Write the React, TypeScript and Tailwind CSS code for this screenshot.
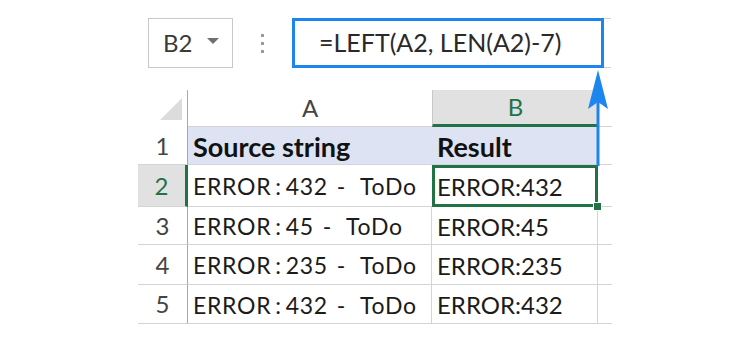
import React from 'react';

const rows = [
  { n: '3', a: 'ERROR:45', b: 'ERROR:45', h: 'h-[38px]' },
  { n: '4', a: 'ERROR:235', b: 'ERROR:235', h: 'h-[40px]' },
  { n: '5', a: 'ERROR:432', b: 'ERROR:432', h: 'h-[39px]' }
];

function SourceText({ code }: { code: string }) {
  const [head, num] = code.split(':');
  return (
    <span className="flex items-baseline whitespace-pre tracking-[0.7px]">
      {head}
      <span className="mx-[4px]">:</span>
      {num}
      <span className="ml-[9px] mr-[14px]">-</span>
      ToDo
    </span>
  );
}

export default function App() {
  return (
    <div className="relative w-[750px] h-[353px] bg-white font-['Lato',sans-serif] text-[#1b1b1b] overflow-hidden">
      {/* formula bar */}
      <div className="flex items-center pt-[18px] pl-[148px]">
        <div className="flex items-center w-[85px] h-[50px] border border-[#c9c9c9] pl-[14px]">
          <span className="text-[24px] text-[#3a3a3a]">B2</span>
          <span className="ml-[15px] mt-[-4px] w-0 h-0 border-l-[6px] border-r-[6px] border-t-[6px] border-l-transparent border-r-transparent border-t-[#707070]" />
        </div>
        <div className="flex flex-col gap-[5px] ml-[28px] mr-[28px]">
          <span className="w-[3px] h-[3px] bg-[#9a9a9a]" />
          <span className="w-[3px] h-[3px] bg-[#9a9a9a]" />
          <span className="w-[3px] h-[3px] bg-[#9a9a9a]" />
        </div>
        <div className="flex items-center w-[312px] h-[50px] border-[3px] border-[#1d86ee] pl-[24px]">
          <span className="text-[25px] text-[#2a2a2a]">=LEFT(A2, LEN(A2)-7)</span>
        </div>
        <div className="flex flex-col justify-between h-[50px]">
          <span className="w-[7px] h-px bg-[#cfcfcf]" />
          <span className="w-[7px] h-px bg-[#cfcfcf]" />
        </div>
      </div>

      {/* sheet */}
      <div className="mt-[22px] ml-[138px] grid grid-cols-[50px_244px_166px_14px] text-[24px]">
        {/* column headers */}
        <div className="relative h-[37px] border-r border-[#a8a8a8]">
          <svg className="absolute left-[22px] top-[8px]" width="22" height="22" viewBox="0 0 22 22">
            <polygon points="22,0 22,22 0,22" fill="#dcdcdc" />
          </svg>
        </div>
        <div className="h-[37px] flex items-center justify-center text-[#444] border-b border-[#d4d4d4]">A</div>
        <div className="h-[37px] flex items-center justify-center bg-[#e1e1e1] text-[#217346] border-b-[3px] border-[#217346] border-l border-l-[#c8c8c8]">B</div>
        <div className="h-[37px] border-b border-[#d4d4d4]" />

        {/* row 1 */}
        <div className="h-[38px] flex items-center justify-center text-[#444] border-r border-[#a8a8a8] border-b border-b-[#d4d4d4]">1</div>
        <div className="h-[38px] flex items-center pl-[5px] pt-[3px] text-[27px] font-bold bg-[#dde3f2] text-[#111] border-b border-[#d4d4d4]">Source string</div>
        <div className="h-[38px] flex items-center pl-[5px] pt-[3px] text-[27px] font-bold bg-[#dde3f2] text-[#111] border-b border-[#d4d4d4]">Result</div>
        <div className="h-[38px] border-b border-l border-[#d4d4d4]" />

        {/* row 2 */}
        <div className="h-[42px] flex items-center justify-center text-[#217346] bg-[#e1e1e1] border-r-[3px] border-[#217346] border-b border-b-[#d4d4d4]">2</div>
        <div className="h-[42px] flex items-center pl-[5px] pt-[2px] text-[23px] border-b border-[#d4d4d4]">
          <SourceText code="ERROR:432" />
        </div>
        <div className="relative h-[42px] flex items-center pl-[2px] pt-[2px] border-[3px] border-[#217346]">
          <span>ERROR:432</span>
          <span className="absolute right-[-7px] bottom-[-7px] w-[9px] h-[9px] bg-[#217346] border border-white" />
        </div>
        <div className="h-[42px] border-b border-[#d4d4d4]" />

        {rows.map(r => (
          <React.Fragment key={r.n}>
            <div className={`${r.h} flex items-center justify-center text-[#444] border-r border-[#a8a8a8] border-b border-b-[#d4d4d4]`}>{r.n}</div>
            <div className={`${r.h} flex items-center pl-[5px] pt-[2px] text-[23px] border-b border-r border-[#d4d4d4]`}>
              <SourceText code={r.a} />
            </div>
            <div className={`${r.h} flex items-center pl-[5px] pt-[2px] border-b border-r border-[#d4d4d4]`}>{r.b}</div>
            <div className={`${r.h} border-b border-[#d4d4d4]`} />
          </React.Fragment>
        ))}
      </div>

      {/* blue arrow from cell to formula bar */}
      <svg className="absolute left-[586px] top-[69px]" width="26" height="100" viewBox="0 0 26 100">
        <line x1="12" y1="30" x2="12" y2="97" stroke="#1d86ee" strokeWidth="3" />
        <polygon points="12,1 2,40 12,33 22,40" fill="#1d86ee" />
      </svg>
    </div>
  );
}
